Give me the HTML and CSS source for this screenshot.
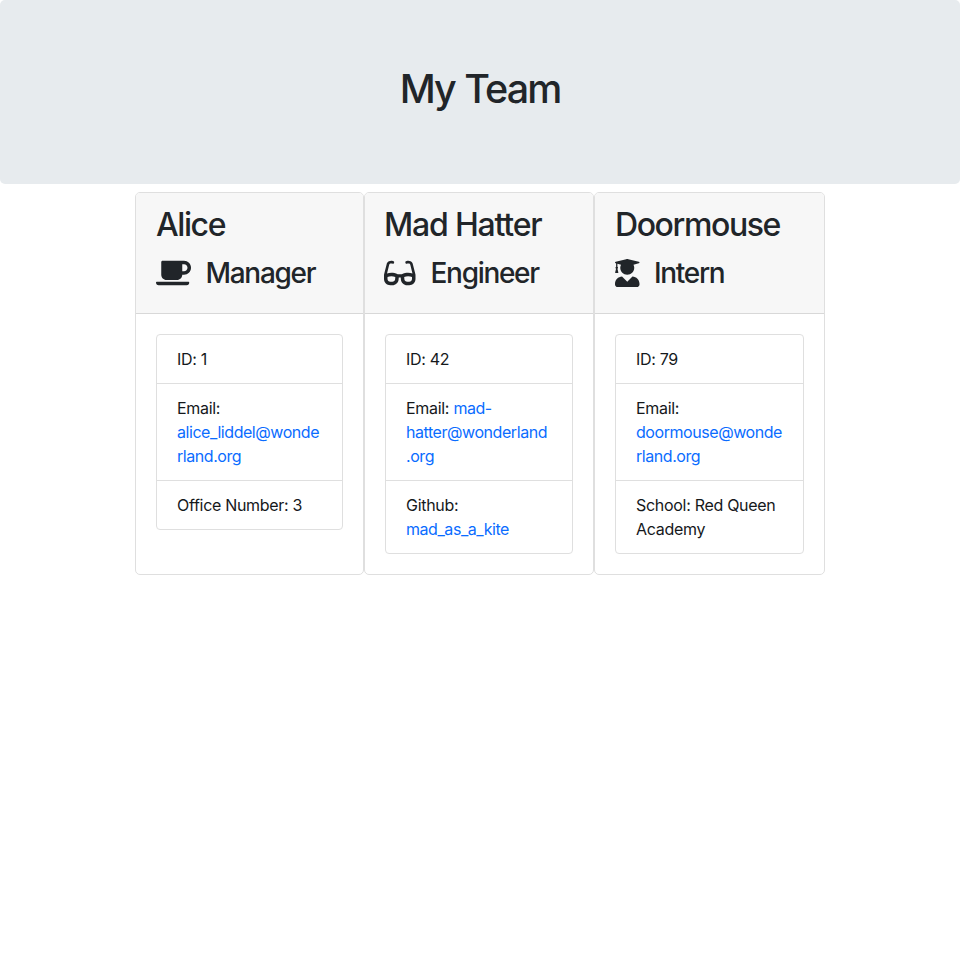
FILE: index.html
```html
<!DOCTYPE html>
<html lang="en">
<head>
<meta charset="utf-8">
<title>My Team</title>
<link rel="stylesheet" href="styles.css">
</head>
<body>
<header class="banner"><h1>My Team</h1></header>
<main class="team">
  <article class="card">
    <div class="card-header">
      <h2 class="alice">Alice</h2>
      <h3><svg class="coffee" viewBox="0 0 640 512"><path d="M192 384h192c53 0 96-43 96-96h32c70.6 0 128-57.4 128-128S582.6 32 512 32H120c-13.3 0-24 10.7-24 24v232c0 53 43 96 96 96zM512 96c35.3 0 64 28.7 64 64s-28.7 64-64 64h-32V96h32zm47.7 384H48.3c-47.6 0-61-64-36-64h583.3c25 0 11.8 64-35.9 64z"/></svg><span>Manager</span></h3>
    </div>
    <div class="card-body">
      <ul class="list">
        <li>ID: 1</li>
        <li>Email: <a href="mailto:alice_liddel@wonderland.org">alice_liddel@wonde<wbr>rland.org</a></li>
        <li>Office Number: 3</li>
      </ul>
    </div>
  </article>
  <article class="card">
    <div class="card-header">
      <h2 class="hatter">Mad Hatter</h2>
      <h3><svg class="glasses" viewBox="0 0 576 512"><path d="M574.1 280.37L528.75 98.66c-5.91-23.7-21.59-44.05-43-55.81-21.44-11.73-46.97-14.11-70.19-6.33l-15.25 5.08c-8.39 2.79-12.92 11.86-10.12 20.24l5.06 15.18c2.79 8.38 11.85 12.91 20.23 10.12l13.18-4.39c10.87-3.62 23-3.57 33.16 1.73 10.29 5.37 17.57 14.56 20.37 25.82l38.46 153.82c-22.19-6.81-49.79-12.46-81.2-12.46-34.77 0-73.98 7.02-114.85 26.74h-73.18c-40.87-19.74-80.08-26.75-114.86-26.75-31.42 0-59.02 5.65-81.21 12.46l38.46-153.83c2.79-11.25 10.09-20.45 20.38-25.81 10.16-5.3 22.28-5.35 33.15-1.73l13.17 4.39c8.38 2.79 17.44-1.74 20.23-10.12l5.06-15.18c2.8-8.38-1.73-17.45-10.12-20.24l-15.25-5.08c-23.22-7.78-48.75-5.41-70.19 6.33-21.41 11.77-37.09 32.11-43 55.8L1.9 280.37A64.218 64.218 0 0 0 0 295.86v70.25C0 429.01 51.58 480 115.2 480h37.12c60.28 0 110.37-45.94 114.88-105.37l2.93-38.63h35.75l2.93 38.63C313.31 434.06 363.4 480 423.68 480h37.12c63.62 0 115.2-50.99 115.2-113.88v-70.25c0-5.23-.64-10.43-1.9-15.5zm-370.72 89.42c-1.97 25.91-24.4 46.21-51.06 46.21H115.2C86.97 416 64 393.62 64 366.11v-37.54c18.12-6.49 43.42-12.92 72.58-12.92 23.86 0 47.26 4.33 69.93 12.92l-3.13 41.22zM512 366.12c0 27.51-22.97 49.88-51.2 49.88h-37.12c-26.67 0-49.1-20.3-51.06-46.21l-3.13-41.22c22.67-8.59 46.08-12.92 69.95-12.92 29.12 0 54.43 6.44 72.56 12.93v37.54z"/></svg><span>Engineer</span></h3>
    </div>
    <div class="card-body">
      <ul class="list">
        <li>ID: 42</li>
        <li>Email: <a href="mailto:mad-hatter@wonderland.org">mad-<wbr>hatter@wonderland<wbr>.org</a></li>
        <li>Github: <a href="#">mad_as_a_kite</a></li>
      </ul>
    </div>
  </article>
  <article class="card">
    <div class="card-header">
      <h2 class="doormouse">Doormouse</h2>
      <h3><svg class="graduate" viewBox="0 0 448 512"><path d="M319.4 320.6L224 416l-95.4-95.4C57.1 323.7 0 382.2 0 454.4v9.6c0 26.5 21.5 48 48 48h352c26.5 0 48-21.5 48-48v-9.6c0-72.2-57.1-130.7-128.6-133.8zM13.6 79.8l6.4 1.5v58.4c-7 4.2-12 11.5-12 20.3 0 8.4 4.6 15.4 11.1 19.7L3.5 242c-1.7 6.9 2.1 14 7.6 14h41.8c5.5 0 9.3-7.1 7.6-14l-15.6-62.3C51.4 175.4 56 168.4 56 160c0-8.8-5-16.1-12-20.3V87.1l66 15.9c-8.6 17.2-14 36.4-14 57 0 70.7 57.3 128 128 128s128-57.3 128-128c0-20.6-5.3-39.8-14-57l96.3-23.2c18.2-4.4 18.2-27.1 0-31.5l-190.4-46c-13-3.1-26.7-3.1-39.7 0L13.6 48.2c-18.1 4.4-18.1 27.2 0 31.6z"/></svg><span>Intern</span></h3>
    </div>
    <div class="card-body">
      <ul class="list">
        <li>ID: 79</li>
        <li>Email: <a href="mailto:doormouse@wonderland.org">doormouse@wonde<wbr>rland.org</a></li>
        <li>School: Red Queen Academy</li>
      </ul>
    </div>
  </article>
</main>
</body>
</html>
```
FILE: styles.css
```css
* { box-sizing: border-box; }
body {
  margin: 0;
  background: #fff;
  color: #212529;
  font: 400 16px/24px Inter, "Liberation Sans", sans-serif;
  letter-spacing: -0.3px;
}
h1, h2, h3, ul { margin: 0; padding: 0; }
h1, h2, h3 { font-weight: 500; line-height: 1.2; white-space: nowrap; }
.banner {
  height: 184px;
  margin-bottom: 8px;
  padding-top: 66px;
  border-radius: 5px;
  background: #e7ebee;
  text-align: center;
}
h1 { font-size: 39.5px; letter-spacing: -1.95px; word-spacing: 1px; }
.team {
  display: grid;
  grid-template-columns: 229px 230px 231px;
  width: 690px;
  height: 383px;
  margin: 0 auto;
}
.card {
  min-width: 0;
  border: 1px solid #dfdfdf;
  border-radius: 5px;
}
.card-header {
  height: 121px;
  padding: 13px 20px 10px;
  border-bottom: 1px solid #d8d8d8;
  border-radius: 4px 4px 0 0;
  background: #f7f7f7;
}
h2 { height: 49px; font-size: 32px; letter-spacing: -1.4px; }
.hatter { margin-left: -1px; letter-spacing: -1.2px; }
h3 {
  display: flex;
  align-items: center;
  height: 36px;
  font-size: 28px;
  letter-spacing: -1.3px;
}
h3 span { padding-top: 2px; }
h3 svg { height: 28px; margin-right: 14.5px; fill: currentColor; }
.coffee { width: 35px; }
h3 .glasses { width: 31.5px; margin: 0 15px 0 -1px; }
.graduate { width: 24.5px; }
.card-body { padding: 20px; }
.list {
  border: 1px solid #dfdfdf;
  border-radius: 4px;
  color: #15181b;
  list-style: none;
}
.list li { padding: 12px 20px; }
.list li + li { border-top: 1px solid #dfdfdf; }
a { color: #0a6cff; letter-spacing: -0.44px; text-decoration: none; }
```
